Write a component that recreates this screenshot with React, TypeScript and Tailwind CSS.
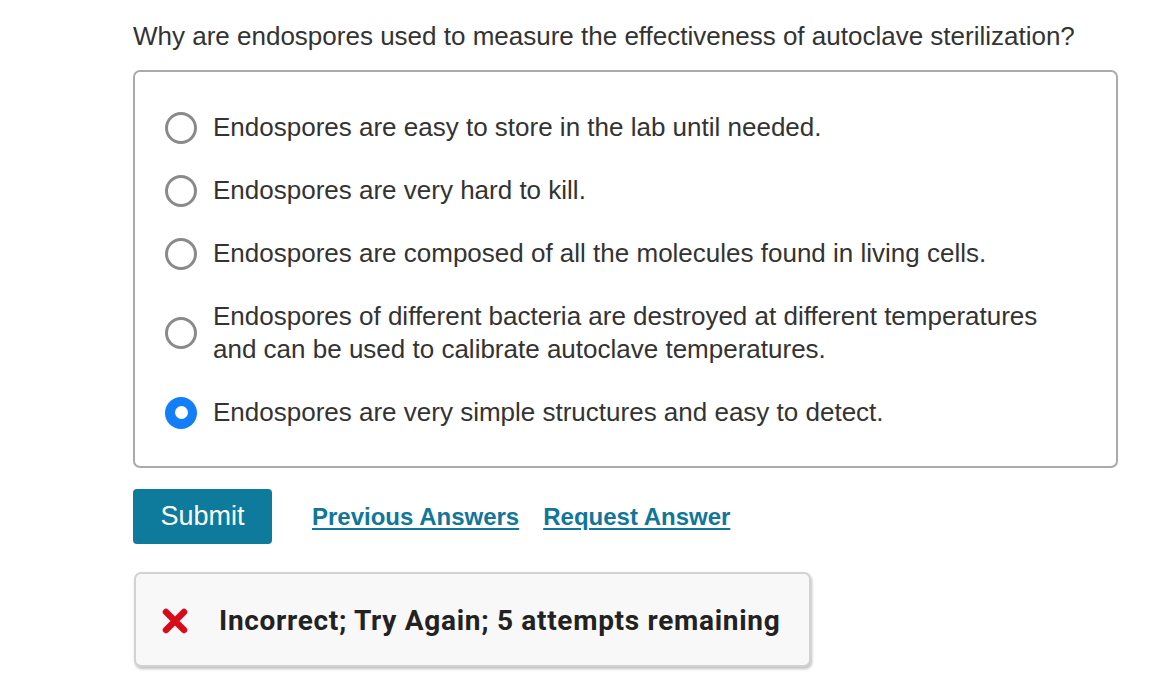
import React from 'react';

const options = [
  'Endospores are easy to store in the lab until needed.',
  'Endospores are very hard to kill.',
  'Endospores are composed of all the molecules found in living cells.',
  'Endospores of different bacteria are destroyed at different temperatures and can be used to calibrate autoclave temperatures.',
  'Endospores are very simple structures and easy to detect.',
];

const Radio: React.FC<{ checked: boolean }> = ({ checked }) =>
  checked ? (
    <span className="w-[32px] h-[32px] rounded-full bg-[#127ef8] flex items-center justify-center shrink-0">
      <span className="w-[13px] h-[13px] rounded-full bg-white" />
    </span>
  ) : (
    <span className="w-[32px] h-[32px] rounded-full border-[3px] border-[#8a8a8a] bg-white shrink-0" />
  );

export default function App() {
  const selected = 4;
  return (
    <div className="w-[1170px] h-[681px] bg-white font-['Liberation_Sans',Arial,sans-serif] text-[#333]">
      <div className="pl-[133px] pt-[20px] w-[1118px]">
        <p className="text-[26px] leading-[33px]">
          Why are endospores used to measure the effectiveness of autoclave sterilization?
        </p>

        <div className="mt-[17px] border-2 border-[#aaaaaa] rounded-[7px] pl-[30px] pr-[40px] pt-[39px] pb-[37px] flex flex-col gap-[30px]">
          {options.map((o, i) => (
            <div key={i} className="flex items-center gap-[16px]">
              <Radio checked={i === selected} />
              <span className="text-[26px] leading-[33px] text-[#333] max-w-[850px]">{o}</span>
            </div>
          ))}
        </div>

        <div className="mt-[21px] flex items-center">
          <button className="w-[139px] h-[55px] bg-[#0e7a9c] rounded-[4px] text-white text-[27px]">
            Submit
          </button>
          <a className="ml-[40px] text-[24px] font-bold text-[#10769a] underline underline-offset-[3px]">
            Previous Answers
          </a>
          <a className="ml-[24px] text-[24px] font-bold text-[#10769a] underline underline-offset-[3px]">
            Request Answer
          </a>
        </div>

        <div className="mt-[28px] ml-[1px] w-[677px] h-[95px] bg-[#f8f8f8] border-2 border-[#d2d2d2] rounded-[7px] shadow-[1px_2px_3px_rgba(0,0,0,0.25)] flex items-center pl-[26px] pt-[3px]">
          <svg width="26" height="26" viewBox="0 0 26 26" className="shrink-0">
            <path d="M4 4 L22 22 M22 4 L4 22" stroke="#d90a1a" strokeWidth="6.5" strokeLinecap="round" />
          </svg>
          <span className="ml-[31px] font-['Roboto',sans-serif] font-bold text-[28px] text-[#222] tracking-[0.7px]">
            Incorrect; Try Again; 5 attempts remaining
          </span>
        </div>
      </div>
    </div>
  );
}
